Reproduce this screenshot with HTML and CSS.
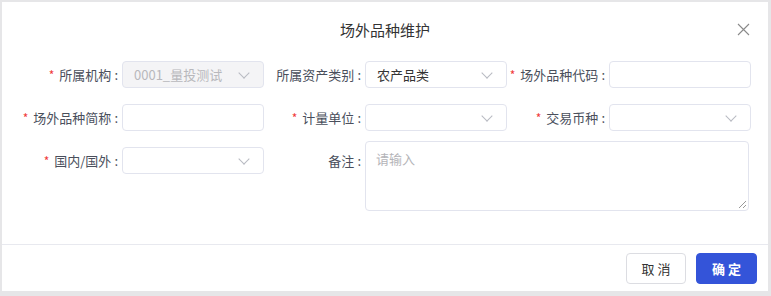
FILE: index.html
```html
<!DOCTYPE html>
<html>
<head lang="zh">
    <meta charset="UTF-8">
    <title>场外品种维护</title>
    <link rel="stylesheet" href="styles.css">
</head>
<body>
    <div class="dialog">
        <div class="dialog-head">
            <span class="title">场外品种维护</span>
            <span class="close">
                <svg width="13" height="13" viewBox="0 0 13 13"><path d="M1 1L12 12M12 1L1 12" stroke="#8a8a8a" stroke-width="1.1" fill="none"/></svg>
            </span>
        </div>
        <div class="dialog-body">
            <div class="form">
                <div class="item">
                    <label class="req">所属机构<b>:</b></label>
                    <div class="field select disabled"><span class="val">0001_量投测试</span><i class="arrow"></i></div>
                </div>
                <div class="item">
                    <label>所属资产类别<b>:</b></label>
                    <div class="field select"><span class="val">农产品类</span><i class="arrow"></i></div>
                </div>
                <div class="item">
                    <label class="req">场外品种代码<b>:</b></label>
                    <div class="field"></div>
                </div>

                <div class="item">
                    <label class="req">场外品种简称<b>:</b></label>
                    <div class="field"></div>
                </div>
                <div class="item">
                    <label class="req">计量单位<b>:</b></label>
                    <div class="field select"><span class="val"></span><i class="arrow"></i></div>
                </div>
                <div class="item">
                    <label class="req">交易币种<b>:</b></label>
                    <div class="field select"><span class="val"></span><i class="arrow"></i></div>
                </div>

                <div class="item">
                    <label class="req">国内/国外<b>:</b></label>
                    <div class="field select"><span class="val"></span><i class="arrow"></i></div>
                </div>
                <div class="item wide">
                    <label>备注<b>:</b></label>
                    <div class="textarea"><span class="ph">请输入</span><i class="grip"></i></div>
                </div>
            </div>
        </div>
        <div class="dialog-foot">
            <button class="btn">取 消</button>
            <button class="btn primary">确 定</button>
        </div>
    </div>
</body>
</html>
```

FILE: styles.css
```css
html,body{margin:0;padding:0;}
body{
    background:#e6e6e8;
    font-family:"Noto Sans CJK SC","Noto Sans",sans-serif;
    width:771px;
    height:296px;
    overflow:hidden;
}
.dialog{
    margin:2px 0 0 2px;
    width:766px;
    height:289px;
    background:#fff;
    display:flex;
    flex-direction:column;
}
.dialog-head{
    height:55px;
    display:flex;
    align-items:center;
    justify-content:center;
    position:relative;
}
.title{
    font-size:15px;
    color:#333;
}
.close{
    position:absolute;
    right:18px;
    top:21px;
    line-height:0;
}
.dialog-body{
    flex:1;
    padding:4px 0 0 20px;
    border-bottom:1px solid #e8e9ef;
}
.form{
    display:grid;
    grid-template-columns:243px 244px 243px;
    grid-template-rows:27px 27px 27px;
    row-gap:16px;
}
.item{
    display:flex;
    align-items:center;
    height:27px;
}
.item.wide{
    grid-column:2 / span 2;
    align-items:flex-start;
}
.item label{
    width:96px;
    margin-right:4px;
    text-align:right;
    font-size:13px;
    color:#4a4f5c;
    white-space:nowrap;
}
.item label b{
    font-weight:normal;
    margin-left:3px;
}
.item.wide label{line-height:27px;}
.item label.req:before{
    content:"*";
    color:#f03a3a;
    margin-right:5px;
    font-size:12px;
}
.field{
    width:142px;
    height:27px;
    box-sizing:border-box;
    border:1px solid #e2e4ee;
    border-radius:4px;
    display:flex;
    align-items:center;
    padding:0 10px 0 11px;
}
.field .val{
    flex:1;
    font-size:13px;
    color:#333;
}
.field.disabled{
    background:#f4f4f6;
}
.field.disabled .val{color:#b8b8bc;}
.arrow{
    width:7px;
    height:7px;
    border-right:1px solid #b8bac2;
    border-bottom:1px solid #b8bac2;
    transform:rotate(45deg);
    margin:-4px 5px 0 0;
}
.textarea{
    margin-top:-6px;
    width:384px;
    height:70px;
    box-sizing:border-box;
    border:1px solid #e2e4ee;
    border-radius:4px;
    padding:3px 10px;
    position:relative;
}
.ph{
    font-size:13px;
    color:#b4b4b8;
}
.grip{
    position:absolute;
    right:2px;
    bottom:2px;
    width:7px;
    height:7px;
    background:linear-gradient(135deg,transparent 45%,#999 45%,#999 52%,transparent 52%,transparent 72%,#999 72%,#999 80%,transparent 80%);
}
.dialog-foot{
    height:46px;
    display:flex;
    justify-content:flex-end;
    align-items:center;
    padding-right:11px;
    gap:10px;
}
.btn{
    width:60px;
    height:31px;
    border:1px solid #dcdde2;
    border-radius:4px;
    background:#fff;
    font-family:"Noto Sans CJK SC",sans-serif;
    font-size:13px;
    color:#333;
    padding:0;
}
.btn.primary{
    width:61px;
    background:#3454d9;
    border-color:#3454d9;
    color:#fff;
    font-weight:bold;
}
```
